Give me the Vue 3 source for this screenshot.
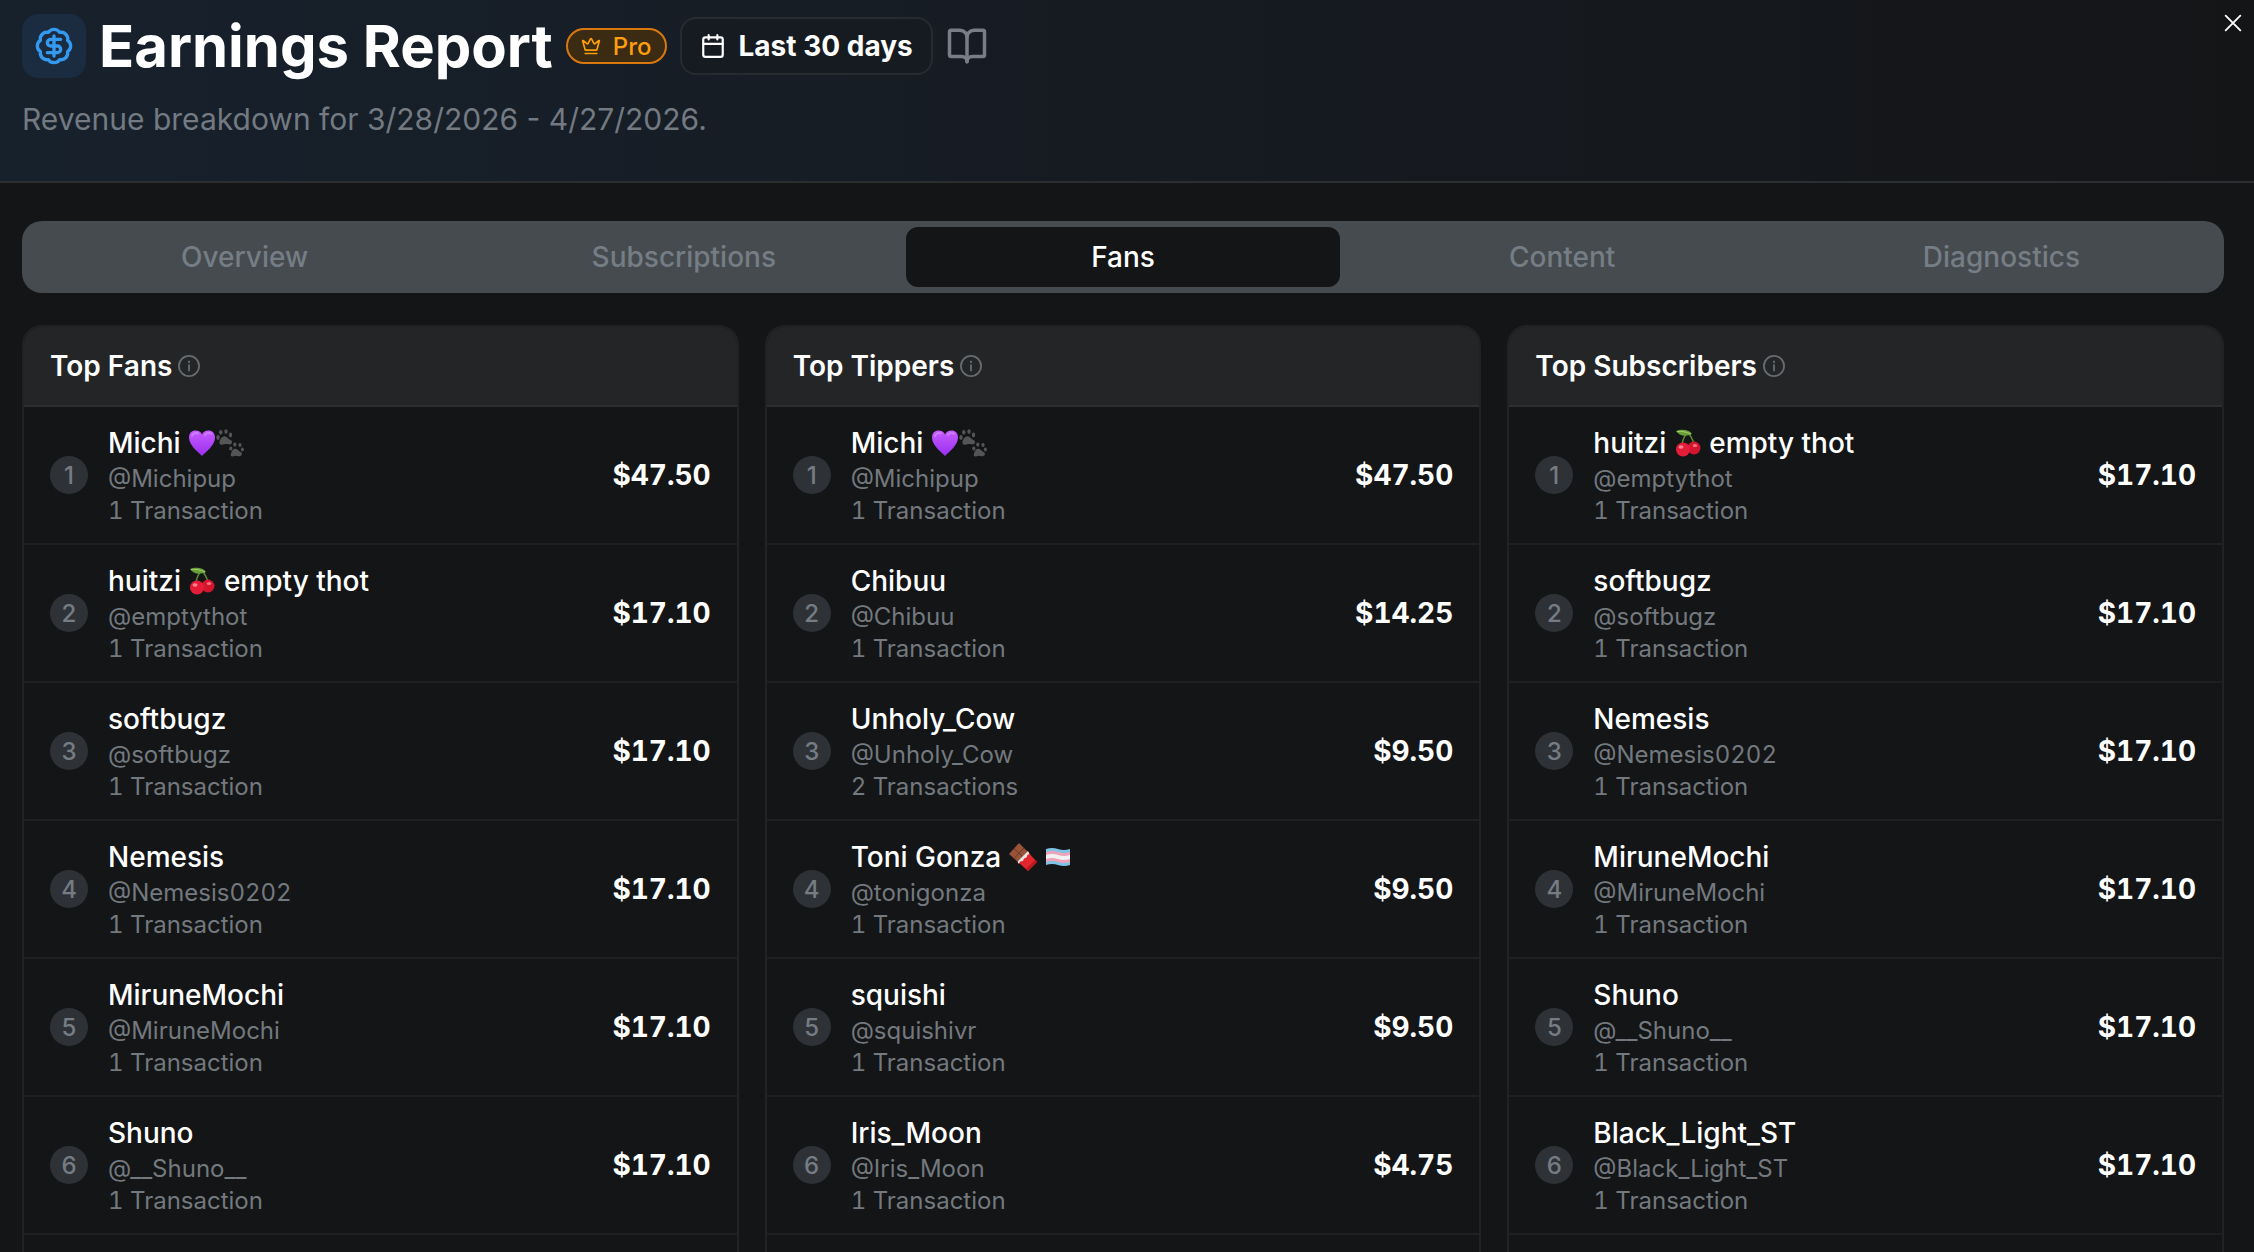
<script setup>
import { ref } from 'vue'

const tabs = ['Overview', 'Subscriptions', 'Fans', 'Content', 'Diagnostics']
const activeTab = ref('Fans')

const michi = { name: ['Michi ', ':heart:', ':paws:'], handle: 'Michipup' }
const huitzi = { name: ['huitzi ', ':cherries:', ' empty thot'], handle: 'emptythot' }
const softbugz = { name: ['softbugz'], handle: 'softbugz' }
const nemesis = { name: ['Nemesis'], handle: 'Nemesis0202' }
const mirune = { name: ['MiruneMochi'], handle: 'MiruneMochi' }
const shuno = { name: ['Shuno'], handle: '__Shuno__' }

const boards = [
  {
    title: 'Top Fans',
    rows: [
      { ...michi, count: 1, total: 47.5 },
      { ...huitzi, count: 1, total: 17.1 },
      { ...softbugz, count: 1, total: 17.1 },
      { ...nemesis, count: 1, total: 17.1 },
      { ...mirune, count: 1, total: 17.1 },
      { ...shuno, count: 1, total: 17.1 },
    ],
  },
  {
    title: 'Top Tippers',
    rows: [
      { ...michi, count: 1, total: 47.5 },
      { name: ['Chibuu'], handle: 'Chibuu', count: 1, total: 14.25 },
      { name: ['Unholy_Cow'], handle: 'Unholy_Cow', count: 2, total: 9.5 },
      { name: ['Toni Gonza ', ':chocolate:', ' ', ':flag:'], handle: 'tonigonza', count: 1, total: 9.5 },
      { name: ['squishi'], handle: 'squishivr', count: 1, total: 9.5 },
      { name: ['Iris_Moon'], handle: 'Iris_Moon', count: 1, total: 4.75 },
    ],
  },
  {
    title: 'Top Subscribers',
    rows: [
      { ...huitzi, count: 1, total: 17.1 },
      { ...softbugz, count: 1, total: 17.1 },
      { ...nemesis, count: 1, total: 17.1 },
      { ...mirune, count: 1, total: 17.1 },
      { ...shuno, count: 1, total: 17.1 },
      { name: ['Black_Light_ST'], handle: 'Black_Light_ST', count: 1, total: 17.1 },
    ],
  },
]

function formatMoney(value) {
  return `$${value.toFixed(2)}`
}

function transactions(count) {
  return count === 1 ? '1 Transaction' : `${count} Transactions`
}
</script>

<template>
  <div class="report">
    <header class="report-header">
      <div class="title-row">
        <span class="title-icon">
          <svg class="icon" viewBox="0 0 24 24" aria-hidden="true">
            <path d="M3.85 8.62a4 4 0 0 1 4.78-4.77 4 4 0 0 1 6.74 0 4 4 0 0 1 4.78 4.78 4 4 0 0 1 0 6.74 4 4 0 0 1-4.77 4.78 4 4 0 0 1-6.75 0 4 4 0 0 1-4.78-4.77 4 4 0 0 1 0-6.76Z" />
            <path d="M16 8h-6a2 2 0 1 0 0 4h4a2 2 0 1 1 0 4H8" />
            <path d="M12 18V6" />
          </svg>
        </span>
        <h1 class="title">Earnings Report</h1>
        <span class="badge">
          <svg class="icon" viewBox="0 0 24 24" aria-hidden="true">
            <path d="M11.56 3.27a.5.5 0 0 1 .88 0L15.39 8.87a1 1 0 0 0 1.52.29L21.18 5.5a.5.5 0 0 1 .8.52l-2.83 10.25a1 1 0 0 1-.96.73H5.81a1 1 0 0 1-.96-.73L2.02 6.02a.5.5 0 0 1 .8-.52l4.28 3.66a1 1 0 0 0 1.52-.29z" />
            <path d="M5 21h14" />
          </svg>
          Pro
        </span>
        <button class="range" type="button">
          <svg class="icon" viewBox="0 0 24 24" aria-hidden="true">
            <path d="M8 2v4M16 2v4M3 10h18" />
            <rect x="3" y="4" width="18" height="18" rx="2" />
          </svg>
          Last 30 days
        </button>
        <button class="guide" type="button" aria-label="Open guide">
          <svg class="icon" viewBox="0 0 24 24" aria-hidden="true">
            <path d="M12 7v14" />
            <path d="M3 18a1 1 0 0 1-1-1V4a1 1 0 0 1 1-1h5a4 4 0 0 1 4 4 4 4 0 0 1 4-4h5a1 1 0 0 1 1 1v13a1 1 0 0 1-1 1h-6a3 3 0 0 0-3 3 3 3 0 0 0-3-3z" />
          </svg>
        </button>
      </div>
      <p class="subtitle">Revenue breakdown for 3/28/2026 - 4/27/2026.</p>
      <button class="close" type="button" aria-label="Close">
        <svg class="icon" viewBox="0 0 24 24" aria-hidden="true">
          <path d="M4 4l16 16M20 4L4 20" />
        </svg>
      </button>
    </header>

    <main class="report-body">
      <nav class="tabs" role="tablist">
        <button
          v-for="tab in tabs"
          :key="tab"
          class="tab"
          :class="{ active: tab === activeTab }"
          type="button"
          role="tab"
          :aria-selected="tab === activeTab"
          @click="activeTab = tab"
        >
          {{ tab }}
        </button>
      </nav>

      <div class="boards">
        <section v-for="board in boards" :key="board.title" class="board">
          <div class="board-header">
            <h2 class="board-title">{{ board.title }}</h2>
            <button class="info" type="button" :aria-label="`About ${board.title}`">
              <svg class="icon" viewBox="0 0 24 24" aria-hidden="true">
                <circle cx="12" cy="12" r="11" />
                <path d="M12 11v6M12 7v1" />
              </svg>
            </button>
          </div>

          <ol class="rows">
            <li v-for="(row, index) in board.rows" :key="row.handle" class="row">
              <span class="rank">{{ index + 1 }}</span>
              <div class="fan">
                <p class="name">
                  <template v-for="(part, i) in row.name" :key="i">
                    <svg v-if="part === ':heart:'" class="emoji" viewBox="0 0 28 28" role="img" aria-label="purple heart">
                      <defs>
                        <linearGradient id="heart-fill" x1="0" y1="0" x2="0" y2="1">
                          <stop offset="0" stop-color="#c65cff" />
                          <stop offset="1" stop-color="#9a2ff0" />
                        </linearGradient>
                      </defs>
                      <path d="M14 27C9 22 1 16 1 8.500C1 4 4 1.500 7.500 1.500C10.500 1.500 13 3 14 5.500C15 3 17.500 1.500 20.500 1.500C24 1.500 27 4 27 8.500C27 16 19 22 14 27Z" fill="url(#heart-fill)" />
                      <path d="M4 7C5 4 8 3.500 10 4.500M17 6C18 4 21 3.500 23 4.500" fill="none" stroke="#d993ff" stroke-width="2" stroke-linecap="round" opacity="0.6" />
                    </svg>
                    <svg v-else-if="part === ':paws:'" class="emoji" viewBox="0 0 28 28" role="img" aria-label="paw prints">
                      <g fill="#555557">
                        <path d="M3.500 12.500C4.500 9 7 6.500 9.500 7.500C12 8.500 12 10 14.500 11C17.500 12.500 16 16 12.500 15.300C10 14.800 9 14.800 7 15.500C4 16.500 3 14.500 3.500 12.500Z" />
                        <ellipse cx="2" cy="8.500" rx="1.700" ry="2.400" />
                        <ellipse cx="4.800" cy="3.300" rx="1.700" ry="2.400" />
                        <ellipse cx="10" cy="2.600" rx="1.700" ry="2.400" />
                        <ellipse cx="14.500" cy="6" rx="1.700" ry="2.400" />
                        <path d="M15 24.500C16 21 18 19 20.500 20C22.500 21 22.500 22 24.500 23C27.500 24.500 25.500 27.800 22.500 27.200C20 26.500 19 26.500 17.500 27.200C15 28 14.200 26.500 15 24.500Z" />
                        <ellipse cx="14.800" cy="19.500" rx="1.600" ry="2.100" />
                        <ellipse cx="18.800" cy="15.600" rx="1.600" ry="2.100" />
                        <ellipse cx="24" cy="16" rx="1.600" ry="2.100" />
                        <ellipse cx="26.400" cy="20.500" rx="1.500" ry="2.100" />
                      </g>
                    </svg>
                    <svg v-else-if="part === ':cherries:'" class="emoji" viewBox="0 0 28 28" role="img" aria-label="cherries">
                      <path d="M8 15C9 10 11 6 14 3M20 14C18 9 16 6 14 3" fill="none" stroke="#5f8a35" stroke-width="1.500" />
                      <path d="M2 2C7 0 15 0 18 5C12 8 5 7 2 2Z" fill="#679f3a" />
                      <path d="M3 2.500C8 2 13 3 17 5" fill="none" stroke="#a7cd6b" stroke-width="1" />
                      <circle cx="20" cy="19" r="6.500" fill="#d3152f" />
                      <circle cx="9" cy="20.500" r="7" fill="#e51c38" />
                      <ellipse cx="7" cy="18" rx="2.500" ry="1.800" fill="#ff8290" />
                      <ellipse cx="21" cy="16.500" rx="2.200" ry="1.500" fill="#fb7280" />
                    </svg>
                    <svg v-else-if="part === ':chocolate:'" class="emoji" viewBox="0 0 28 28" role="img" aria-label="chocolate bar">
                      <path d="M10 0L20 10L10 20L0 11Z" fill="#985338" />
                      <path d="M5 5.500L15 15M15 5L5 15.500" stroke="#6b3827" stroke-width="1" />
                      <path d="M19 9L28 19L19 28L9 19Z" fill="#e3262b" />
                      <path d="M19 8L20.500 11L18.500 12L17.500 14.500L15 15.500L14 18L11 18.500L10 21L8.500 19L11 16L14 13Z" fill="#e6e3e0" />
                      <path d="M28 19L19 28L17 26L26 17Z" fill="#bd171f" />
                    </svg>
                    <svg v-else-if="part === ':flag:'" class="emoji" viewBox="0 0 28 28" role="img" aria-label="transgender flag">
                      <path d="M2 6Q8 4 14 6T26 6V22Q20 24 14 22T2 22Z" fill="#7fc3e6" />
                      <path d="M2 9Q8 7 14 9T26 9V19Q20 21 14 19T2 19Z" fill="#eda4b9" />
                      <path d="M2 12Q8 10 14 12T26 12V16Q20 18 14 16T2 16Z" fill="#f4f1f2" />
                    </svg>
                    <span v-else>{{ part }}</span>
                  </template>
                </p>
                <p class="meta">@{{ row.handle }}</p>
                <p class="meta">{{ transactions(row.count) }}</p>
              </div>
              <strong class="total">{{ formatMoney(row.total) }}</strong>
            </li>
          </ol>
        </section>
      </div>
    </main>
  </div>
</template>

<style>
body {
  margin: 0;
  background: #141517;
}
</style>

<style scoped>
.report {
  display: flex;
  flex-direction: column;
  height: 100vh;
  overflow: hidden;
  background: #141517;
  color: #fff;
  font-family: Inter, 'Liberation Sans', sans-serif;
  font-size: 28px;
}

h1,
h2,
p,
ol {
  margin: 0;
  padding: 0;
}

button {
  padding: 0;
  border: 0;
  background: none;
  color: inherit;
  font: inherit;
  cursor: pointer;
}

.icon {
  display: block;
  flex-shrink: 0;
  fill: none;
  stroke: currentColor;
  stroke-width: 2;
  stroke-linecap: round;
  stroke-linejoin: round;
}

.report-header {
  position: relative;
  flex-shrink: 0;
  padding: 8px 22px 39px;
  border-bottom: 2px solid #2b2f31;
  background: linear-gradient(90deg, #17212c 0%, #161b22 50%, #141517 100%);
}

.title-row {
  display: flex;
  align-items: center;
  gap: 13px;
}

.title-icon {
  display: flex;
  align-items: center;
  justify-content: center;
  width: 64px;
  height: 64px;
  border-radius: 16px;
  background: #1b2b40;
  color: #339af0;
}

.title-icon .icon {
  width: 40px;
  height: 40px;
}

.title {
  font-size: 58px;
  font-weight: 700;
  line-height: 76px;
}

.badge {
  display: flex;
  align-items: center;
  gap: 12px;
  box-sizing: border-box;
  height: 36px;
  padding: 0 13px;
  border: 2px solid #d9780f;
  border-radius: 18px;
  background: #3a2b12;
  color: #ff9d0a;
  font-size: 24px;
  font-weight: 500;
}

.badge .icon {
  width: 20px;
  height: 20px;
}

.range {
  display: flex;
  align-items: center;
  gap: 13px;
  height: 58px;
  padding: 0 18px;
  border: 2px solid #252b31;
  box-sizing: border-box;
  border-radius: 16px;
  background: #161b21;
  font-weight: 700;
}

.range .icon {
  width: 26px;
  height: 26px;
}

.guide {
  color: #777e85;
}

.guide .icon {
  width: 42px;
  height: 42px;
}

.subtitle {
  margin-top: 12px;
  color: #737a82;
  font-size: 30px;
  line-height: 46px;
}

.close {
  position: absolute;
  top: 12px;
  right: 10px;
}

.close .icon {
  width: 22px;
  height: 22px;
}

.report-body {
  display: flex;
  flex: 1;
  flex-direction: column;
  gap: 32px;
  min-height: 0;
  padding: 38px 30px 0 22px;
}

.tabs {
  display: grid;
  flex-shrink: 0;
  grid-template-columns: repeat(5, 1fr);
  gap: 6px;
  padding: 6px;
  border-radius: 20px;
  background: #464b4f;
}

.tab {
  height: 60px;
  border-radius: 12px;
  color: #757d85;
  font-weight: 500;
}

.tab.active {
  background: #141517;
  color: #fff;
}

.boards {
  display: grid;
  flex: 1;
  grid-template-columns: repeat(3, 1fr);
  gap: 26px;
  min-height: 0;
}

.board {
  overflow: hidden;
  border: 2px solid #202224;
  border-bottom: 0;
  border-radius: 20px 20px 0 0;
}

.board-header {
  display: flex;
  align-items: center;
  gap: 6px;
  height: 78px;
  padding: 0 26px;
  border-bottom: 2px solid #2d3032;
  background: #242527;
}

.board-title {
  font-size: 28px;
  font-weight: 600;
  line-height: 40px;
}

.info {
  color: #666b6f;
}

.info .icon {
  width: 22px;
  height: 22px;
}

.rows {
  list-style: none;
}

.row {
  display: flex;
  align-items: center;
  gap: 20px;
  padding: 16px 26px;
  border-bottom: 2px solid #1e2022;
}

.rank {
  display: flex;
  flex-shrink: 0;
  align-items: center;
  justify-content: center;
  width: 38px;
  height: 38px;
  border-radius: 50%;
  background: #2e3236;
  color: #757c83;
  font-size: 24px;
  font-weight: 500;
}

.fan {
  flex: 1;
  min-width: 0;
}

.name {
  font-weight: 500;
  line-height: 40px;
  white-space: pre;
}

.emoji {
  display: inline-block;
  width: 28px;
  height: 28px;
  vertical-align: -4px;
}

.meta {
  color: #73797e;
  font-size: 24px;
  font-variant-numeric: tabular-nums;
  line-height: 32px;
}

.total {
  font-weight: 700;
  font-variant-numeric: tabular-nums;
}
</style>
